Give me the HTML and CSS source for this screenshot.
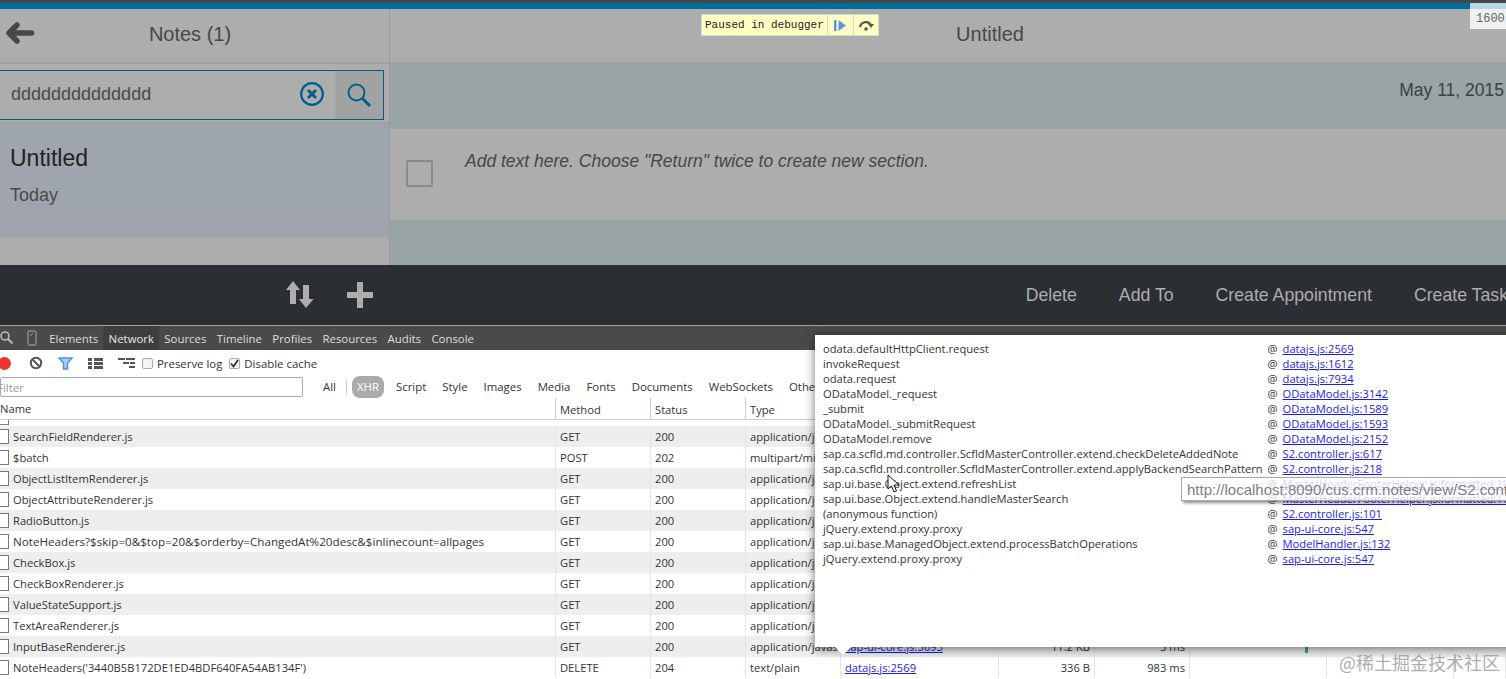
FILE: index.html
```html
<!DOCTYPE html>
<html lang="en">
<head>
<meta charset="utf-8">
<title>Notes - DevTools</title>
<link rel="stylesheet" href="styles.css">
</head>
<body>
<div class="page">
  <div class="topdark"></div>
  <div class="topblue"></div>
  <div class="app">
    <div class="master">
      <div class="bar master-bar">
        <svg class="back" width="30" height="24" viewBox="0 0 30 24"><path d="M12 4 L4 12 L12 20 M5 12 H26.500" fill="none" stroke="#474747" stroke-width="5.500" stroke-linecap="round" stroke-linejoin="round"/></svg>
        <span class="bar-title">Notes (1)</span>
      </div>
      <div class="searchwrap">
        <div class="search">
          <span class="search-text">dddddddddddddd</span>
          <svg class="clear" width="26" height="26" viewBox="0 0 26 26"><circle cx="13" cy="13" r="10.800" fill="none" stroke="#005e89" stroke-width="2.200"/><path d="M9 9 L17 17 M17 9 L9 17" stroke="#005e89" stroke-width="3"/></svg>
          <div class="search-btn">
            <svg width="26" height="26" viewBox="0 0 26 26"><circle cx="10.500" cy="10.500" r="8" fill="none" stroke="#005e89" stroke-width="2"/><path d="M16 16 L24 24" stroke="#005e89" stroke-width="3"/></svg>
          </div>
        </div>
      </div>
      <div class="item">
        <div class="item-title">Untitled</div>
        <div class="item-date">Today</div>
      </div>
    </div>
    <div class="detail">
      <div class="bar detail-bar"><span class="bar-title">Untitled</span></div>
      <div class="date-row">May 11, 2015</div>
      <div class="note-row">
        <span class="note-check"></span>
        <span class="note-text">Add text here. Choose "Return" twice to create new section.</span>
      </div>
    </div>
  </div>
  <div class="footer">
    <div class="footer-icons">
      <svg width="30" height="30" viewBox="0 0 30 30"><path d="M8 1 L15 10 H11 V24 H5 V10 H1 Z M21 28 L14 19 H18 V5 H24 V19 H28.500 Z" fill="#adadad"/></svg>
      <svg width="28" height="28" viewBox="0 0 28 28"><path d="M11 1 H17 V11 H27 V17 H17 V27 H11 V17 H1 V11 H11 Z" fill="#adadad"/></svg>
    </div>
    <div class="footer-actions">
      <span>Delete</span><span>Add To</span><span>Create Appointment</span><span>Create Task</span>
    </div>
  </div>
  <div class="devtabs">
    <svg class="dt-search" width="14" height="14" viewBox="0 0 14 14"><circle cx="5" cy="5" r="4" fill="none" stroke="#bbb" stroke-width="1.600"/><path d="M8 8 L12.500 12.500" stroke="#bbb" stroke-width="2"/></svg>
    <svg class="dt-device" width="10" height="16" viewBox="0 0 10 16"><rect x="1" y="1" width="8" height="14" rx="1" fill="none" stroke="#aaa"/><path d="M3 6 L6 3" stroke="#999"/></svg>
    <span class="tab">Elements</span><span class="tab tab-on">Network</span><span class="tab">Sources</span><span class="tab">Timeline</span><span class="tab">Profiles</span><span class="tab">Resources</span><span class="tab">Audits</span><span class="tab">Console</span>
  </div>
  <div class="toolbar">
    <span class="rec"></span>
    <svg class="tool-ic" width="14" height="14" viewBox="0 0 14 14"><circle cx="7" cy="7" r="5.200" fill="none" stroke="#555" stroke-width="2"/><path d="M3.500 3.500 L10.500 10.500" stroke="#555" stroke-width="2"/></svg>
    <svg class="tool-ic" width="15" height="13" viewBox="0 0 15 13"><path d="M1 1 H14 L9.500 6 V12 H5.500 V6 Z" fill="#a9cdf5" stroke="#4d90e8" stroke-width="1.500"/></svg>
    <svg class="tool-ic" width="15" height="11" viewBox="0 0 15 11"><path d="M0 0 H4 V3 H0 Z M6 0 H15 V3 H6 Z M0 4 H4 V7 H0 Z M6 4 H15 V7 H6 Z M0 8 H4 V11 H0 Z M6 8 H15 V11 H6 Z" fill="#555"/></svg>
    <svg class="tool-tree" width="17" height="11" viewBox="0 0 17 11"><path d="M0 0 H7 V2 H0 Z M8 0 H17 V2 H8 Z M5 4 H11 V6 H5 Z M12 4 H17 V6 H12 Z M11 8 H17 V10 H11 Z" fill="#555"/></svg>
    <label class="chk"><span class="box"></span>Preserve log</label>
    <label class="chk"><span class="box"><svg width="9" height="9" viewBox="0 0 9 9"><path d="M1 4.500 L3.500 7.500 L8 1" fill="none" stroke="#333" stroke-width="1.800"/></svg></span>Disable cache</label>
  </div>
  <div class="filterbar">
    <div class="filter">Filter</div>
    <span class="ft">All</span><span class="sep"></span><span class="ft ft-on">XHR</span><span class="ft">Script</span><span class="ft">Style</span><span class="ft">Images</span><span class="ft">Media</span><span class="ft">Fonts</span><span class="ft">Documents</span><span class="ft">WebSockets</span><span class="ft">Other</span>
  </div>
  <div class="row head"><div class="name">Name</div><div>Method</div><div>Status</div><div>Type</div><div>Initiator</div><div>Size</div><div>Time</div><div></div><div></div><div></div></div>
  <div class="sliver"><span class="doc"></span></div>
  <div class="row odd"><div class="name"><span class="doc"></span>SearchFieldRenderer.js</div><div>GET</div><div>200</div><div>application/javascript</div><div></div><div></div><div></div><div></div><div></div><div></div></div>
  <div class="row"><div class="name"><span class="doc"></span>$batch</div><div>POST</div><div>202</div><div>multipart/mixed</div><div></div><div></div><div></div><div></div><div></div><div></div></div>
  <div class="row odd"><div class="name"><span class="doc"></span>ObjectListItemRenderer.js</div><div>GET</div><div>200</div><div>application/javascript</div><div></div><div></div><div></div><div></div><div></div><div></div></div>
  <div class="row"><div class="name"><span class="doc"></span>ObjectAttributeRenderer.js</div><div>GET</div><div>200</div><div>application/javascript</div><div></div><div></div><div></div><div></div><div></div><div></div></div>
  <div class="row odd"><div class="name"><span class="doc"></span>RadioButton.js</div><div>GET</div><div>200</div><div>application/javascript</div><div></div><div></div><div></div><div></div><div></div><div></div></div>
  <div class="row"><div class="name name-long"><span class="doc"></span>NoteHeaders?$skip=0&amp;$top=20&amp;$orderby=ChangedAt%20desc&amp;$inlinecount=allpages</div><div>GET</div><div>200</div><div>application/json</div><div></div><div></div><div></div><div></div><div></div><div></div></div>
  <div class="row odd"><div class="name"><span class="doc"></span>CheckBox.js</div><div>GET</div><div>200</div><div>application/javascript</div><div></div><div></div><div></div><div></div><div></div><div></div></div>
  <div class="row"><div class="name"><span class="doc"></span>CheckBoxRenderer.js</div><div>GET</div><div>200</div><div>application/javascript</div><div></div><div></div><div></div><div></div><div></div><div></div></div>
  <div class="row odd"><div class="name"><span class="doc"></span>ValueStateSupport.js</div><div>GET</div><div>200</div><div>application/javascript</div><div></div><div></div><div></div><div></div><div></div><div></div></div>
  <div class="row"><div class="name"><span class="doc"></span>TextAreaRenderer.js</div><div>GET</div><div>200</div><div>application/javascript</div><div></div><div></div><div></div><div></div><div></div><div></div></div>
  <div class="row odd"><div class="name"><span class="doc"></span>InputBaseRenderer.js</div><div>GET</div><div>200</div><div>application/javascript</div><div><a class="lnk">sap-ui-core.js:5693</a></div><div class="num">11.2 KB</div><div class="num">5 ms</div><div class="tl"><span class="tick"></span></div><div></div><div></div></div>
  <div class="row"><div class="name"><span class="doc"></span>NoteHeaders('3440B5B172DE1ED4BDF640FA54AB134F')</div><div>DELETE</div><div>204</div><div>text/plain</div><div><a class="lnk">datajs.js:2569</a></div><div class="num">336 B</div><div class="num">983 ms</div><div></div><div></div><div></div></div>

  <div class="paused">
    <span class="paused-text">Paused in debugger</span>
    <span class="paused-btn"><svg width="14" height="13" viewBox="0 0 14 13"><path d="M1 1 H3.500 V12 H1 Z M5.500 1 L13 6.500 L5.500 12 Z" fill="#5b95e8"/></svg></span>
    <span class="paused-btn"><svg width="16" height="12" viewBox="0 0 16 12"><path d="M2 8 A6 6 0 0 1 13 6" fill="none" stroke="#555" stroke-width="2.200"/><path d="M10 5 H16 L13 9 Z" fill="#555"/><circle cx="8" cy="10" r="1.800" fill="#555"/></svg></span>
  </div>
  <div class="ruler"><div class="ruler-top"></div><div class="ruler-num">1600</div></div>

  <div class="popover">
    <div>odata.defaultHttpClient.request</div><div>@ <a class="lnk">datajs.js:2569</a></div>
    <div>invokeRequest</div><div>@ <a class="lnk">datajs.js:1612</a></div>
    <div>odata.request</div><div>@ <a class="lnk">datajs.js:7934</a></div>
    <div>ODataModel._request</div><div>@ <a class="lnk">ODataModel.js:3142</a></div>
    <div>_submit</div><div>@ <a class="lnk">ODataModel.js:1589</a></div>
    <div>ODataModel._submitRequest</div><div>@ <a class="lnk">ODataModel.js:1593</a></div>
    <div>ODataModel.remove</div><div>@ <a class="lnk">ODataModel.js:2152</a></div>
    <div>sap.ca.scfld.md.controller.ScfldMasterController.extend.checkDeleteAddedNote</div><div>@ <a class="lnk">S2.controller.js:617</a></div>
    <div>sap.ca.scfld.md.controller.ScfldMasterController.extend.applyBackendSearchPattern</div><div>@ <a class="lnk">S2.controller.js:218</a></div>
    <div>sap.ui.base.Object.extend.refreshList</div><div>@ <a class="lnk">MasterHeaderFooterHelper.js:formatted:199</a></div>
    <div>sap.ui.base.Object.extend.handleMasterSearch</div><div>@ <a class="lnk">MasterHeaderFooterHelper.js:formatted:177</a></div>
    <div>(anonymous function)</div><div>@ <a class="lnk">S2.controller.js:101</a></div>
    <div>jQuery.extend.proxy.proxy</div><div>@ <a class="lnk">sap-ui-core.js:547</a></div>
    <div>sap.ui.base.ManagedObject.extend.processBatchOperations</div><div>@ <a class="lnk">ModelHandler.js:132</a></div>
    <div>jQuery.extend.proxy.proxy</div><div>@ <a class="lnk">sap-ui-core.js:547</a></div>
  </div>
  <div class="pop-arrow"></div>
  <div class="tooltip">http://localhost:8090/cus.crm.notes/view/S2.controller.js</div>
  <svg class="cursor" width="14" height="20" viewBox="0 0 14 20"><path d="M1 1 V15 L4.500 12 L7 18 L9.500 17 L7 11 H12 Z" fill="#fff" stroke="#111" stroke-width="1"/></svg>
  <div class="watermark">@稀土掘金技术社区</div>
</div>
</body>
</html>
```

FILE: styles.css
```css
* { box-sizing: border-box; }
html, body { margin: 0; padding: 0; }
body { background: #fff; overflow: hidden; }
.page { position: relative; width: 1506px; height: 679px; overflow: hidden; font-family: "Open Sans", "Liberation Sans", sans-serif; }

.topdark { height: 3px; background: #474747; }
.topblue { height: 6px; background: #006f9f; }

.app { display: flex; width: 1605px; margin-left: -5px; height: 256px; font-family: "Liberation Sans", sans-serif; background: #adadad; color: #474747; }
.master { width: 395px; flex: none; border-right: 1px solid #9a9a9a; display: flex; flex-direction: column; }
.detail { flex: 1; background: #98a4a5; display: flex; flex-direction: column; }
.bar { height: 55px; flex: none; background: #adadad; border-bottom: 2px solid #9f9f9f; display: flex; align-items: center; justify-content: center; position: relative; padding-bottom: 2px; }
.bar-title { font-size: 20px; }
.master-bar { padding-right: 4px; }
.back { position: absolute; left: 10px; top: 12px; }
.detail-bar { padding-right: 10px; }
.searchwrap { height: 60px; flex: none; background: #adadad; border-bottom: 2px solid #9f9f9f; padding: 6px 5px 0 0; }
.search { height: 50px; border: 1px solid #005e89; display: flex; align-items: center; padding-left: 15px; }
.search-text { flex: 1; font-size: 18px; color: #4a4a4a; margin-bottom: 2px; }
.clear { margin: 0 10px 2px 0; }
.search-btn { width: 48px; height: 48px; background: #a2a2a2; display: flex; align-items: center; justify-content: center; }
.item { height: 113px; flex: none; background: #9ea5ad; border-bottom: 1px solid #a3a3a3; padding: 20px 0 0 15px; }
.item-title { font-size: 23px; line-height: 28px; color: #222; }
.item-date { font-size: 18px; line-height: 22px; margin-top: 12px; color: #4a4a4a; }
.date-row { height: 65px; flex: none; text-align: right; padding: 16px 96px 0 0; font-size: 17.500px; color: #3f3f3f; }
.note-row { height: 91px; flex: none; background: #adadad; display: flex; position: relative; }
.note-check { width: 27px; height: 27px; border: 2px solid #8a8a8a; border-radius: 2px; margin: 31px 0 0 16px; flex: none; }
.note-text { margin: 23px 0 0 32px; font-size: 17.500px; line-height: 19px; font-style: italic; color: #474747; }

.footer { height: 61px; background: #2b2f33; border-bottom: 1px solid #a0a0a0; display: flex; align-items: center; font-family: "Liberation Sans", sans-serif; color: #adadad; font-size: 17.700px; }
.footer-icons { width: 389px; flex: none; display: flex; justify-content: flex-end; align-items: center; gap: 31px; padding-right: 15px; }
.footer-actions { flex: 1; display: flex; justify-content: flex-end; gap: 42px; white-space: nowrap; margin-right: -2px; position: relative; }

.devtabs { height: 24px; background: #4a4a4a; display: flex; align-items: center; font-size: 11.400px; color: #ddd; white-space: nowrap; }
.dt-search { flex: none; }
.dt-device { margin: 0 7px 0 13px; flex: none; }
.tab { padding: 0 5.200px; height: 24px; line-height: 26px; }
.tab-on { background: #3e3e3e; color: #e8e8e8; }

.toolbar { height: 26px; display: flex; align-items: center; font-size: 11.400px; color: #333; background: #fff; position: relative; }
.rec { width: 13px; height: 13px; background: #e33; border-radius: 50%; margin: 0 18px 0 -2px; flex: none; }
.tool-ic { margin-right: 15px; flex: none; }
.tool-tree { margin-right: 7px; flex: none; }
.chk { display: flex; align-items: center; margin-right: 7px; white-space: nowrap; }
.box { width: 11px; height: 11px; border: 1px solid #aaa; border-radius: 2px; margin-right: 4px; background: #f4f4f4; display: flex; align-items: center; justify-content: center; flex: none; }

.filterbar { height: 22px; display: flex; align-items: center; font-size: 11.400px; color: #333; white-space: nowrap; }
.filter { width: 303px; height: 20px; border: 1px solid #aaa; border-radius: 2px; margin-right: 20px; text-indent: -4px; line-height: 20px; color: #999; flex: none; }
.ft { margin-right: 16px; line-height: 24px; }
.sep { width: 1px; height: 16px; background: #ccc; margin: 0 5px 0 -6px; }
.ft-on { background: #aaa; color: #fff; border-radius: 8px; padding: 0 5px; height: 22px; line-height: 22px; margin-right: 12px; }

.row { display: grid; grid-template-columns: 556px 95px 95px 95px 158px 96px 95px 137px 127px 52px; height: 21px; line-height: 21px; font-size: 11.200px; color: #333; white-space: nowrap; }
.row > div { border-right: 1px solid #e4e4e4; padding: 0 4px; overflow: hidden; }
.name { display: flex; align-items: center; padding-left: 0 !important; }
.name-long { font-size: 11.650px; }
.odd { background: #eee; }
.head { height: 22px; line-height: 23px; border-bottom: 1px solid #ccc; background: #fff; }
.head > div { border-right-color: #ccc; }
.sliver { height: 6px; overflow: hidden; background: #fff; }
.sliver .doc { display: block; margin-top: -10px; }
.doc { width: 9px; height: 15px; margin: 0 4px 0 0; border: 1px solid #777; border-left: 0; background: #fff; flex: none; }
.num { text-align: right; }
.tick { display: block; width: 3px; height: 6px; background: #3a9aa8; margin: 11px 0 0 111px; }
.lnk { color: #1c1ce8; text-decoration: underline; font-size: 11.200px; }
.popover .lnk { margin-left: 2px; }

.paused { position: absolute; left: 701px; top: 14px; height: 22px; display: flex; align-items: stretch; background: #ffffc2; border: 1px solid #d6d6d6; font-family: "Liberation Mono", monospace; font-size: 11px; color: #222; }
.paused-text { padding: 0 3px; line-height: 20px; border-right: 1px solid #d6d6d6; }
.paused-btn { width: 25px; display: flex; align-items: center; justify-content: center; }
.paused-btn + .paused-btn { border-left: 1px solid #d6d6d6; }
.ruler { position: absolute; right: 0; top: 3px; width: 36px; }
.ruler-top { height: 6px; background: #b6d9e8; }
.ruler-num { height: 20px; background: #eef0f2; font-family: "Liberation Mono", monospace; font-size: 12px; line-height: 20px; color: #666; padding-left: 6px; white-space: nowrap; }

.popover { position: absolute; left: 815px; top: 335px; width: 760px; height: 312px; background: #fff; box-shadow: 0 2px 10px rgba(0,0,0,.55); padding: 6px 8px; display: grid; grid-template-columns: max-content 1fr; grid-auto-rows: 15px; column-gap: 5px; align-content: start; font-size: 11.200px; line-height: 15px; color: #333; white-space: nowrap; }
.pop-arrow { position: absolute; left: 835px; top: 647px; border: 8px solid transparent; border-top-color: #fff; border-bottom: 0; }
.tooltip { position: absolute; left: 1181px; top: 477px; width: 340px; height: 24px; background: rgba(255,255,255,.8); border: 1px solid #aaa; box-shadow: 2px 2px 3px rgba(0,0,0,.45); font-family: "Liberation Sans", sans-serif; font-size: 15px; line-height: 24px; padding-left: 5px; color: #808080; white-space: nowrap; overflow: hidden; }
.cursor { position: absolute; left: 887px; top: 474px; }
.watermark { position: absolute; left: 1339px; top: 651px; font-family: "Noto Sans CJK SC", sans-serif; font-size: 18px; line-height: 22px; color: rgba(150,150,150,.8); white-space: nowrap; }
```
